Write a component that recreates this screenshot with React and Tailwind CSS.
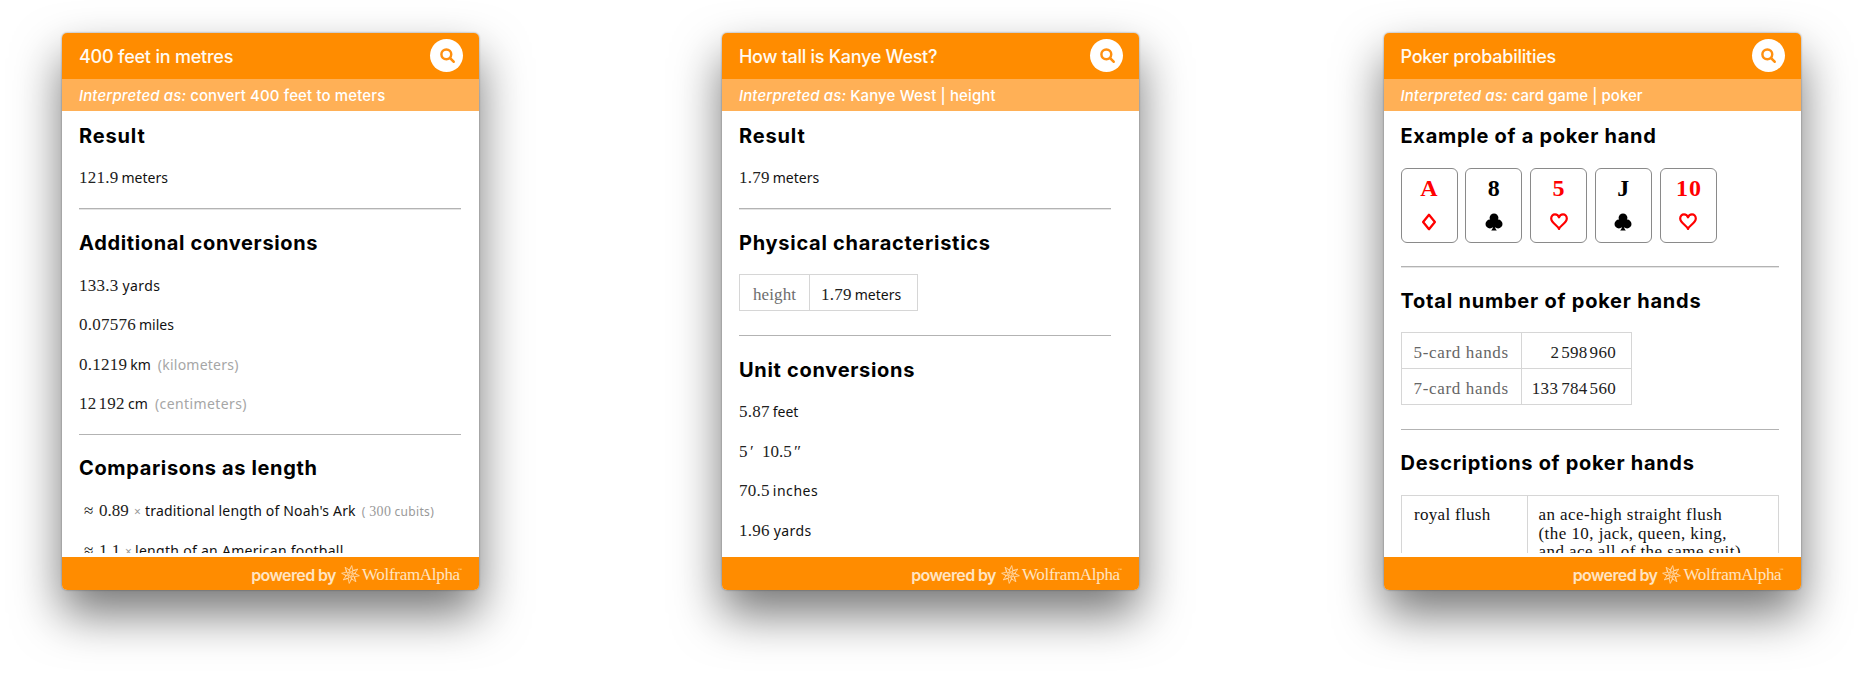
import React from "react";
import clsx from "clsx";

const serif = "font-['Liberation_Serif',serif]";

function SearchButton() {
  return (
    <button className="relative -top-px flex size-[33px] items-center justify-center rounded-full bg-white">
      <svg className="ml-px size-[15px]" viewBox="0 0 14 14" fill="none" stroke="#ff9010" strokeLinecap="round">
        <circle cx="5.9" cy="5.9" r="4.6" strokeWidth="2.3" />
        <path d="M9.4 9.4 12.7 12.8" strokeWidth="2.4" />
      </svg>
    </button>
  );
}

function Spikey() {
  return (
    <svg className="size-[19px]" viewBox="-9.5 -9.5 19 19" fill="none" stroke="#ffe0b8" strokeLinejoin="round">
      {[8, 53, 98, 143, 188, 233, 278, 323].map((a) => (
        <g key={a} transform={`rotate(${a})`}>
          <path d="M0 -9 L1.7 -4.4 L0 -2 L-1.7 -4.4 Z" strokeWidth="0.75" />
          <path d="M1.7 -4.4 L4.4 -4.6" strokeWidth="0.75" />
        </g>
      ))}
      <circle r="1.5" strokeWidth="0.7" />
    </svg>
  );
}

function Card({ title, titleClass, interpreted, interpretedClass, inner, children }) {
  return (
    <article className="flex h-[557px] w-[417px] flex-col overflow-hidden rounded-[5px] bg-white shadow-[0_24px_48px_rgba(0,0,0,0.54),0_0_2px_rgba(0,0,0,0.45)]">
      <header className="flex h-[46px] shrink-0 items-center justify-between bg-[#ff8c00] pl-[17px] pr-4">
        <h1 className={clsx("text-[18px] font-medium text-[#fffaf2]", titleClass)}>{title}</h1>
        <SearchButton />
      </header>
      <div className="flex h-8 shrink-0 items-center whitespace-pre bg-[#ffb056] pl-[17px] pt-[2px] text-[15px] font-medium text-white">
        <em className="mr-[4px] tracking-[0.13px]">Interpreted as:</em>
        <span className={interpretedClass}>{interpreted}</span>
      </div>
      <div className="h-[442px] shrink-0 overflow-hidden pl-[17px] pt-[10px]">
        <div className={inner}>{children}</div>
      </div>
      <footer className="mt-1 flex h-[33px] shrink-0 items-center justify-end bg-[#ff8c00] pr-[17.5px] pt-[2px] text-[#ffe4c2]">
        <span className="mr-[5px] text-[16px] font-semibold tracking-[-0.6px]">powered by</span>
        <Spikey />
        <span className={clsx(serif, "ml-[2px] flex text-[17px] tracking-[-0.3px]")}>
          WolframAlpha<span className="-ml-[2px] text-[4px] leading-[16px]">™</span>
        </span>
      </footer>
    </article>
  );
}

function Heading({ className = "leading-[29px] tracking-[0.7px]", children }) {
  return (
    <h2 className={clsx("h-7 whitespace-nowrap text-[20px] font-bold text-black", className)}>
      {children}
    </h2>
  );
}

function Rule({ className }) {
  return <div className={clsx("mb-[19px] h-[1.5px] border-t border-[#b3b3b3] bg-[#e4e4e4]", className)} />;
}

function Num({ className = "tracking-[0.25px]", children }) {
  return <span className={clsx(serif, "text-[17px] text-[#222]", className)}>{children}</span>;
}

function Row({ children }) {
  return (
    <div className="flex h-[39.5px] items-baseline whitespace-pre font-['Noto_Sans',sans-serif] text-[14px] leading-[39.5px] text-[#111]">
      {children}
    </div>
  );
}

function Rows({ children }) {
  return <div className="mt-[9px]">{children}</div>;
}

const note = "ml-[7px] text-[#a6a6a6]";

function PlayingCard({ rank, color, suit, className }) {
  return (
    <div className={clsx("flex h-[75px] w-[57px] flex-col items-center rounded-[6px] border border-[#8a8a8a]", color)}>
      <div className={clsx(serif, "mt-[6px] h-[27px] text-[24px] font-bold leading-[27px]", className)}>{rank}</div>
      <svg className="mt-[11px] h-[18px] w-[18px]" viewBox="0 0 18 18">
        {suit === "diamond" && (
          <path d="M9 1.8 14.9 9 9 16.2 3.1 9Z" fill="none" stroke="currentColor" strokeWidth="2.3" strokeLinejoin="round" />
        )}
        {suit === "heart" && (
          <path
            d="M9 16C8.3 12.9 1.2 10 1.2 5.4 1.2 3 2.9 1.4 5 1.4 7 1.4 8.4 2.6 9 4.3 9.6 2.6 11 1.4 13 1.4 15.1 1.4 16.8 3 16.8 5.4 16.8 10 9.7 12.9 9 16Z"
            fill="none"
            stroke="currentColor"
            strokeWidth="2.2"
            strokeLinejoin="round"
          />
        )}
        {suit === "club" && (
          <g fill="currentColor">
            <circle cx="9" cy="4.8" r="4.4" />
            <circle cx="4.9" cy="11" r="4.4" />
            <circle cx="13.1" cy="11" r="4.4" />
            <path d="M8 6h2l.4 9.5 1.4 1.9H6.2l1.4-1.9Z" />
          </g>
        )}
      </svg>
    </div>
  );
}

const line = "border-[#d6d6d6]";

export default function App() {
  return (
    <main className="flex h-[680px] w-[1860px] bg-white pl-[62px] pt-[33px] font-['Inter',sans-serif]">
      <Card
        title="400 feet in metres"
        titleClass="tracking-[-0.21px]"
        interpreted="convert 400 feet to meters"
        interpretedClass="tracking-[0.13px]"
        inner="w-[382px]"
      >
        <Heading className="leading-[30px] tracking-[0.85px]">Result</Heading>
        <Rows>
          <Row><Num>121.9</Num><span className="ml-[3px]">meters</span></Row>
        </Rows>
        <Rule className="mt-[10.5px]" />
        <Heading className="leading-[29px] tracking-[0.66px]">Additional conversions</Heading>
        <Rows>
          <Row><Num>133.3</Num><span className="ml-[4px] tracking-[0.4px]">yards</span></Row>
          <Row><Num>0.07576</Num><span className="ml-[3px]">miles</span></Row>
          <Row><Num>0.1219</Num><span className="ml-[3px]">km</span><span className={clsx(note, "tracking-[0.23px]")}>(kilometers)</span></Row>
          <Row><Num>12</Num><Num className="ml-[2px] tracking-[0.2px]">192</Num><span className="ml-[3.5px]">cm</span><span className={clsx(note, "tracking-[0.4px]")}>(centimeters)</span></Row>
        </Rows>
        <Rule className="mt-[10px]" />
        <Heading className="leading-[29px] tracking-[0.64px]">Comparisons as length</Heading>
        <Rows>
          <Row>
            <Num className="ml-[5px] w-[15px]">≈</Num><Num className="w-[35px]">0.89</Num>
            <span className="w-[11px] text-[12px] text-[#999]">×</span>
            <span className="tracking-[0.17px]">traditional length of Noah's Ark</span>
            <span className="ml-[6px] text-[12px] tracking-[0.35px] text-[#999]">
              ( <span className={clsx(serif, "text-[14px] tracking-[0.4px]")}>300</span><span className="ml-[3px]">cubits)</span>
            </span>
          </Row>
          <Row>
            <Num className="ml-[5px] w-[15px]">≈</Num><Num className="w-[26px]">1.1</Num>
            <span className="w-[10px] text-[12px] text-[#999]">×</span>
            <span className="tracking-[0.29px]">length of an American football</span>
          </Row>
        </Rows>
      </Card>

      <div className="ml-[243px]">
        <Card
          title="How tall is Kanye West?"
          titleClass="tracking-[-0.28px]"
          interpreted="Kanye West | height"
          interpretedClass="tracking-[0.12px]"
          inner="w-[372px]"
        >
          <Heading className="leading-[30px] tracking-[0.85px]">Result</Heading>
          <Rows>
            <Row><Num>1.79</Num><span className="ml-[3px]">meters</span></Row>
          </Rows>
          <Rule className="mt-[10.5px]" />
          <Heading className="leading-[29px] tracking-[0.73px]">Physical characteristics</Heading>
          <div className={clsx("mt-[17px] flex h-[37px] w-[179px] items-baseline border leading-[40px]", line)}>
            <div className={clsx(serif, "h-[35px] w-[70px] border-r pl-[13px] text-[17px] tracking-[0.11px] text-[#6d6d6d]", line)}>height</div>
            <div className="pl-[11px] font-['Noto_Sans',sans-serif] text-[14px] text-[#111]"><Num>1.79</Num><span className="ml-[3px]">meters</span></div>
          </div>
          <Rule className="mt-[24px]" />
          <Heading className="leading-[30px] tracking-[0.7px]">Unit conversions</Heading>
          <Rows>
            <Row><Num>5.87</Num><span className="ml-[3px]">feet</span></Row>
            <Row><Num className="w-[11px]">5</Num><Num className="w-[12px]">′</Num><Num className="w-[32px]">10.5</Num><Num>″</Num></Row>
            <Row><Num>70.5</Num><span className="ml-[3px] tracking-[0.55px]">inches</span></Row>
            <Row><Num>1.96</Num><span className="ml-[4px] tracking-[0.4px]">yards</span></Row>
          </Rows>
        </Card>
      </div>

      <div className="ml-[244.5px]">
        <Card
          title="Poker probabilities"
          titleClass="tracking-[-0.24px]"
          interpreted="card game | poker"
          interpretedClass="tracking-[0.05px]"
          inner="w-[378px]"
        >
          <Heading className="leading-[30px] tracking-[0.72px]">Example of a poker hand</Heading>
          <div className="mt-[19px] flex gap-[7.75px]">
            <PlayingCard rank="A" color="text-[#f00]" suit="diamond" />
            <PlayingCard rank="8" color="text-black" suit="club" />
            <PlayingCard rank="5" color="text-[#f00]" suit="heart" />
            <PlayingCard rank="J" color="text-black" suit="club" />
            <PlayingCard rank="10" color="text-[#f00]" suit="heart" className="pl-[2px] tracking-[1px]" />
          </div>
          <Rule className="mt-[23px]" />
          <Heading className="leading-[29px] tracking-[0.78px]">Total number of poker hands</Heading>
          <div className={clsx(serif, "mt-[17px] grid w-[231px] grid-cols-[120px_1fr] grid-rows-[36px_35px] border text-[17px] leading-[39px]", line)}>
            <div className={clsx("border-b border-r pl-[12px] tracking-[0.66px] text-[#666]", line)}>5-card hands</div>
            <div className={clsx("flex justify-end gap-[2px] border-b pr-[14.5px] tracking-[0.3px] text-[#222]", line)}><span>2</span><span>598</span><span>960</span></div>
            <div className={clsx("border-r pl-[12px] tracking-[0.66px] text-[#666]", line)}>7-card hands</div>
            <div className="flex justify-end gap-[2px] pr-[14.5px] tracking-[0.3px] text-[#222]"><span className="mr-px">133</span><span>784</span><span>560</span></div>
          </div>
          <Rule className="mt-[24px]" />
          <Heading>Descriptions of poker hands</Heading>
          <div className={clsx(serif, "mt-[18px] grid h-[80px] grid-cols-[126px_1fr] whitespace-pre border text-[17px] leading-[18.7px] text-[#111]", line)}>
            <div className={clsx("border-r pl-[12.5px] pt-[10px] tracking-[0.3px]", line)}>royal flush</div>
            <div className="pl-[11px] pt-[10px] tracking-[0.44px]">
              <div>an ace-high straight flush</div>
              <div>(the 10, jack, queen, king,</div>
              <div>and ace all of the same suit)</div>
            </div>
          </div>
        </Card>
      </div>
    </main>
  );
}
